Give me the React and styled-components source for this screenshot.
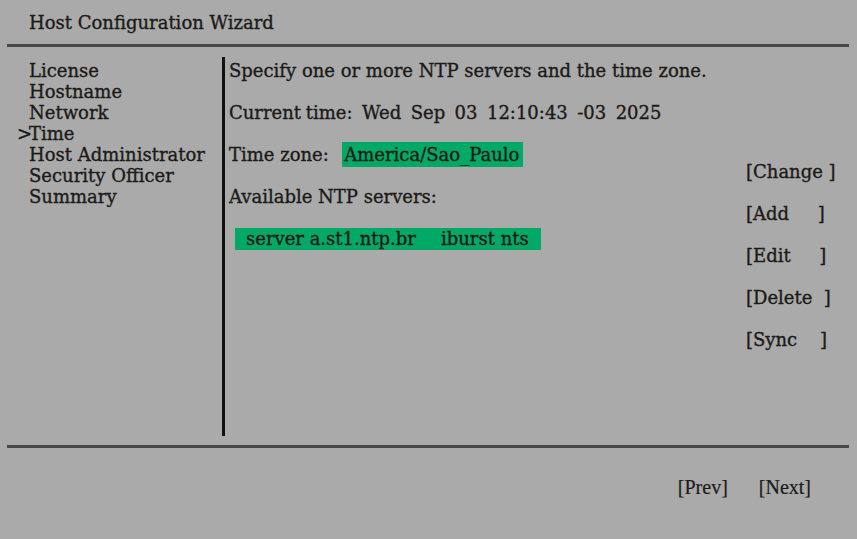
import React from 'react';
import styled, { createGlobalStyle } from 'styled-components';

const Global = createGlobalStyle`
    html, body {
        margin: 0;
        padding: 0;
        background: #aaaaaa;
    }
    body {
        font-family: "DejaVu Serif", "Liberation Serif", serif;
        font-size: 18px;
        color: #1c1a18;
        -webkit-text-stroke: 0.35px #1c1a18;
    }
`;

const Screen = styled.div`
    width: 857px;
    height: 539px;
    display: flex;
    flex-direction: column;
    background: #aaaaaa;
`;

const Title = styled.div`
    height: 44px;
    padding-left: 29px;
    line-height: 46px;
`;

const Rule = styled.div`
    margin: 0 8px 0 7px;
    height: 3px;
    background: #474747;
`;

const Body = styled.div`
    display: flex;
    padding-top: 10px;
    margin-bottom: 9px;
    height: 379px;
`;

const Sidebar = styled.ul`
    list-style: none;
    margin: 0;
    padding: 3px 0 0 17px;
    width: 205px;
    line-height: 21px;
`;

const Step = styled.li`
    white-space: pre;
    &::before {
        content: '${(p) => (p.$active ? '>' : ' ')}';
        display: inline-block;
        width: 12px;
    }
`;

const Divider = styled.div`
    width: 3px;
    background: #111;
`;

const Content = styled.div`
    flex: 1;
    display: flex;
    flex-direction: column;
    gap: 21px;
    padding: 3px 0 0 4px;
    line-height: 21px;
    white-space: pre;
`;

const Line = styled.div`
    height: 21px;
    word-spacing: ${(p) => p.$tight ? '-1px' : 'normal'};
`;

const Highlight = styled.span`
    display: inline-block;
    background: #00aa66;
    line-height: 25px;
    padding: 0 4px 0 2px;
    margin: -2px 0 0 2px;
`;

const ServerRow = styled.div`
    margin-left: 6px;
    width: 306px;
    height: 22px;
    line-height: 22px;
    background: #00aa66;
    display: flex;
`;

const ServerCell = styled.span`
    width: ${(p) => p.$w}px;
    padding-left: ${(p) => p.$pad || 0}px;
    flex-shrink: 0;
`;

const Actions = styled.div`
    width: 111px;
    display: flex;
    flex-direction: column;
    gap: 21px;
    padding-top: 104px;
    line-height: 21px;
`;

const Action = styled.div`
    white-space: pre;
`;

const Footer = styled.div`
    display: flex;
    justify-content: flex-end;
    gap: 31px;
    padding: 27px 46px 0 0;
    font-family: "Liberation Serif", serif;
    font-size: 20px;
    line-height: 24px;
    -webkit-text-stroke: 0.2px #1c1a18;
`;

const FooterButton = styled.span``;

const steps = [
    'License',
    'Hostname',
    'Network',
    'Time',
    'Host Administrator',
    'Security Officer',
    'Summary',
];

const actions = ['[Change ]', '[Add     ]', '[Edit     ]', '[Delete  ]', '[Sync    ]'];

const App = () => {
    return (
        <Screen>
            <Global />
            <Title>Host Configuration Wizard</Title>
            <Rule />
            <Body>
                <Sidebar>
                    {steps.map((s) => (
                        <Step key={s} $active={s === 'Time'}>
                            {s}
                        </Step>
                    ))}
                </Sidebar>
                <Divider />
                <Content>
                    <Line>Specify one or more NTP servers and the time zone.</Line>
                    <Line $tight>Current time:  Wed  Sep  03  12:10:43  -03  2025</Line>
                    <Line>
                        Time zone:  <Highlight>America/Sao_Paulo</Highlight>
                    </Line>
                    <Line>Available NTP servers:</Line>
                    <ServerRow>
                        <ServerCell $w={195} $pad={11}>
                            server a.st1.ntp.br
                        </ServerCell>
                        <ServerCell $w={100}>iburst nts</ServerCell>
                    </ServerRow>
                </Content>
                <Actions>
                    {actions.map((a) => (
                        <Action key={a}>{a}</Action>
                    ))}
                </Actions>
            </Body>
            <Rule />
            <Footer>
                <FooterButton>[Prev]</FooterButton>
                <FooterButton>[Next]</FooterButton>
            </Footer>
        </Screen>
    );
};

export default App;
